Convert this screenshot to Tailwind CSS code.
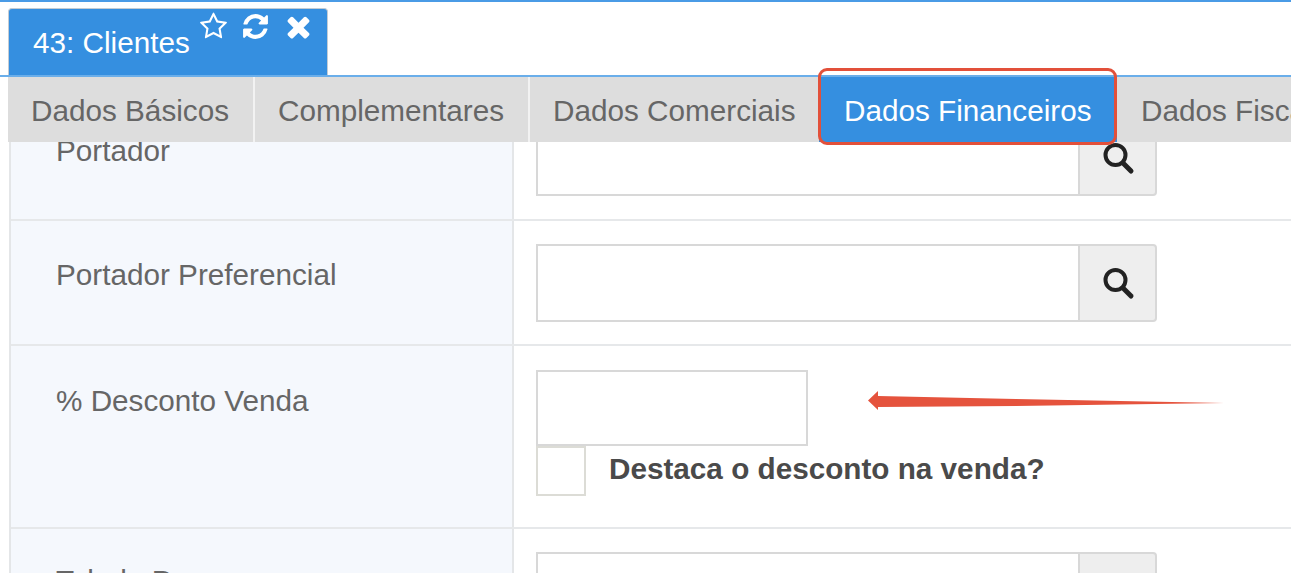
<!DOCTYPE html>
<html lang="pt">
<head>
<meta charset="utf-8">
<script src="https://cdn.jsdelivr.net/npm/@tailwindcss/browser@4"></script>
<title>Clientes</title>
</head>
<body class="bg-white">
<div class="relative h-[573px] w-[1291px] overflow-hidden bg-white font-['Liberation_Sans',Arial,sans-serif] text-[#666]">
  <div class="h-[2px] bg-[#4a9be6]"></div>
  <!-- Window tab -->
  <div class="h-[73px] pl-2 pt-[6px]">
    <div class="relative h-[67px] w-[320px] rounded-t-[4px] border border-b-0 border-[#c4ccd4] bg-[#358fe0] pl-6 pt-[18px] text-[29.7px] leading-[32px] text-white">
      43: Clientes
      <div class="absolute left-[190px] top-[3px] flex items-start">
        <svg class="h-[29px] w-[29px] fill-white" viewBox="0 0 1792 1792"><path d="M1201 1004l306-297-422-62-189-382-189 382-422 62 306 297-73 421 378-199 377 199zm527-357q0 22-26 48l-363 354 86 500q1 7 1 20 0 50-41 50-19 0-40-12l-449-236-449 236q-22 12-40 12-21 0-31.500-14.500t-10.500-35.500q0-6 2-20l86-500-364-354q-25-27-25-48 0-37 56-46l502-73 225-455q19-41 49-41t49 41l225 455 502 73q56 9 56 46z"/></svg>
        <svg class="ml-[13px] h-[29px] w-[29px] fill-white" viewBox="0 0 1792 1792"><path d="M1639 1056q0 5-1 7-64 268-268 434.500t-478 166.500q-146 0-282.500-55t-243.500-157l-129 129q-19 19-45 19t-45-19-19-45v-448q0-26 19-45t45-19h448q26 0 45 19t19 45-19 45l-137 137q71 66 161 102t187 36q134 0 250-65t186-179q11-17 53-117 8-23 30-23h192q13 0 22.500 9.500t9.500 22.500zm25-800v448q0 26-19 45t-45 19h-448q-26 0-45-19t-19-45 19-45l138-138q-148-137-349-137-134 0-250 65t-186 179q-11 17-53 117-8 23-30 23h-199q-13 0-22.500-9.500t-9.500-22.500v-7q65-268 270-434.500t480-166.500q146 0 284 55.500t245 156.500l130-129q19-19 45-19t45 19 19 45z"/></svg>
        <svg class="ml-[12px] mt-[-2px] h-[33px] w-[33px] fill-white" viewBox="0 0 1792 1792"><path d="M1490 1322q0 40-28 68l-136 136q-28 28-68 28t-68-28l-294-294-294 294q-28 28-68 28t-68-28l-136-136q-28-28-28-68t28-68l294-294-294-294q-28-28-28-68t28-68l136-136q28-28 68-28t68 28l294 294 294-294q28-28 68-28t68 28l136 136q28 28 28 68t-28 68l-294 294 294 294q28 28 28 68z"/></svg>
      </div>
    </div>
  </div>
  <div class="h-[2px] bg-[#6aaeea]"></div>
  <!-- Section tabs -->
  <div class="relative z-10 ml-2 flex h-[65px] items-center bg-[#dddddd] text-[29.7px] leading-[67px] whitespace-nowrap">
    <div class="h-full w-[247px] shrink-0 border-r-2 border-[#f2f2f2] pl-[23px]">Dados Básicos</div>
    <div class="h-full w-[275px] shrink-0 border-r-2 border-[#f2f2f2] pl-[23px]">Complementares</div>
    <div class="h-full w-[289px] shrink-0 pl-[23px]">Dados Comerciais</div>
    <div class="h-full w-[298px] shrink-0 bg-[#358fe0] pl-[25px] text-white">Dados Financeiros</div>
    <div class="h-full shrink-0 pl-[24px]">Dados Fiscais</div>
  </div>
  <!-- Form rows -->
  <div class="ml-[9px] mt-[-45px] border-l-2 border-[#e4e6e8]">
    <div class="flex h-[124px] border-b-2 border-[#e6e8ea]">
      <div class="w-[503px] border-r-2 border-[#e4e6e8] bg-[#f5f8fd] pl-[45px] pt-[37px] text-[29.7px] leading-[34px]">Portador</div>
      <div class="flex pl-[22px] pt-[23px]">
        <div class="h-[76px] w-[544px] border-2 border-[#d8d8d8] bg-white"></div>
        <div class="flex h-[76px] w-[77px] items-center justify-center rounded-r-[4px] border-2 border-l-0 border-[#d8d8d8] bg-[#eeeeee]">
          <svg class="h-[36px] w-[36px]" viewBox="0 0 36 36" fill="none" stroke="#222"><circle cx="15.500" cy="15" r="10" stroke-width="4"/><path d="M23 23l8 8" stroke-width="5" stroke-linecap="round"/></svg>
        </div>
      </div>
    </div>
    <div class="flex h-[125px] border-b-2 border-[#e6e8ea]">
      <div class="w-[503px] border-r-2 border-[#e4e6e8] bg-[#f5f8fd] pl-[45px] pt-[37px] text-[29.7px] leading-[34px]">Portador Preferencial</div>
      <div class="flex pl-[22px] pt-[23px]">
        <div class="h-[78px] w-[544px] border-2 border-[#d8d8d8] bg-white"></div>
        <div class="flex h-[78px] w-[77px] items-center justify-center rounded-r-[4px] border-2 border-l-0 border-[#d8d8d8] bg-[#eeeeee]">
          <svg class="h-[36px] w-[36px]" viewBox="0 0 36 36" fill="none" stroke="#222"><circle cx="15.500" cy="15" r="10" stroke-width="4"/><path d="M23 23l8 8" stroke-width="5" stroke-linecap="round"/></svg>
        </div>
      </div>
    </div>
    <div class="flex h-[183px] border-b-2 border-[#e6e8ea]">
      <div class="w-[503px] border-r-2 border-[#e4e6e8] bg-[#f5f8fd] pl-[45px] pt-[38px] text-[29.7px] leading-[34px]">% Desconto Venda</div>
      <div class="pl-[22px] pt-[24px]">
        <div class="h-[76px] w-[272px] border-2 border-[#d8d8d8] bg-white"></div>
        <div class="flex items-start">
          <div class="h-[50px] w-[50px] border-2 border-[#dcdcd6] bg-white"></div>
          <div class="pl-[23px] pt-[6px] text-[29.7px] leading-[34px] font-bold whitespace-nowrap text-[#4a4a4a]">Destaca o desconto na venda?</div>
        </div>
      </div>
    </div>
    <div class="flex h-[60px]">
      <div class="w-[503px] border-r-2 border-[#e4e6e8] bg-[#f5f8fd] pl-[45px] pt-[35px] text-[29.7px] leading-[34px]">Tabela Preços</div>
      <div class="flex pl-[22px] pt-[23px]">
        <div class="h-[76px] w-[544px] border-2 border-[#d8d8d8] bg-white"></div>
        <div class="h-[76px] w-[77px] rounded-r-[4px] border-2 border-l-0 border-[#d8d8d8] bg-[#eeeeee]"></div>
      </div>
    </div>
  </div>
  <!-- Annotations -->
  <div class="absolute left-[818px] top-[68px] z-20 h-[77px] w-[299px] rounded-[9px] border-[3px] border-[#e2503a]"></div>
  <svg class="absolute left-[866px] top-[388px] z-20" width="362" height="26" viewBox="0 0 362 26">
    <polygon class="fill-[#e5533d]" points="2,12.500 12,3 12,8 150,11 358,15 150,18 12,19 12,22"/>
  </svg>
</div>
</body>
</html>
